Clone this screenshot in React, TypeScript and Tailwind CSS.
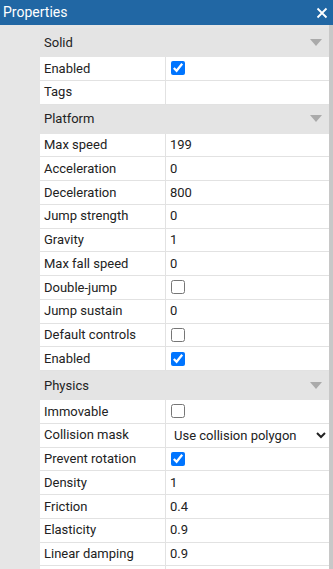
import React from 'react';

type Row =
  | { label: string; kind: 'text'; value: string }
  | { label: string; kind: 'check'; checked: boolean }
  | { label: string; kind: 'select'; value: string };

interface Section {
  title: string;
  rows: Row[];
}

const sections: Section[] = [
  {
    title: 'Solid',
    rows: [
      { label: 'Enabled', kind: 'check', checked: true },
      { label: 'Tags', kind: 'text', value: '' },
    ],
  },
  {
    title: 'Platform',
    rows: [
      { label: 'Max speed', kind: 'text', value: '199' },
      { label: 'Acceleration', kind: 'text', value: '0' },
      { label: 'Deceleration', kind: 'text', value: '800' },
      { label: 'Jump strength', kind: 'text', value: '0' },
      { label: 'Gravity', kind: 'text', value: '1' },
      { label: 'Max fall speed', kind: 'text', value: '0' },
      { label: 'Double-jump', kind: 'check', checked: false },
      { label: 'Jump sustain', kind: 'text', value: '0' },
      { label: 'Default controls', kind: 'check', checked: false },
      { label: 'Enabled', kind: 'check', checked: true },
    ],
  },
  {
    title: 'Physics',
    rows: [
      { label: 'Immovable', kind: 'check', checked: false },
      { label: 'Collision mask', kind: 'select', value: 'Use collision polygon' },
      { label: 'Prevent rotation', kind: 'check', checked: true },
      { label: 'Density', kind: 'text', value: '1' },
      { label: 'Friction', kind: 'text', value: '0.4' },
      { label: 'Elasticity', kind: 'text', value: '0.9' },
      { label: 'Linear damping', kind: 'text', value: '0.9' },
      { label: 'Angular damping', kind: 'text', value: '0.01' },
    ],
  },
];

const PropertyRow: React.FC<{ row: Row }> = ({ row }) => (
  <div className="flex h-[23.75px] shrink-0 bg-white border-b border-[#e2e2e2]">
    <div className="w-[126px] shrink-0 border-r border-[#e2e2e2] pl-1 flex items-center whitespace-nowrap overflow-hidden">
      {row.label}
    </div>
    <div className="flex-1 flex items-center pl-[4px] min-w-0">
      {row.kind === 'text' && <span>{row.value}</span>}
      {row.kind === 'check' && (
        <input
          type="checkbox"
          defaultChecked={row.checked}
          className="w-[14px] h-[14px] m-0 ml-[1px] accent-[#0075ff]"
        />
      )}
      {row.kind === 'select' && (
        <select className="w-full h-full bg-white text-[13px] outline-none pr-[2px]" defaultValue={row.value}>
          <option>{row.value}</option>
          <option>Use bounding box</option>
          <option>Circle</option>
        </select>
      )}
    </div>
  </div>
);

const App: React.FC = () => {
  return (
    <div className="w-[333px] h-[569px] overflow-hidden flex flex-col bg-[#e6e6e6] text-[13px] text-[#222] font-['Roboto',sans-serif]">
      <div className="h-[25px] shrink-0 bg-[#2167a4] text-white flex items-center justify-between pl-[3px] pr-[4px] text-[14px]">
        <span>Properties</span>
        <svg width="12" height="12" viewBox="0 0 12 12" className="mr-[1px]">
          <path d="M1.5 1.5 L10.5 10.5 M10.5 1.5 L1.5 10.5" stroke="white" strokeWidth="1.8" />
        </svg>
      </div>
      <div className="flex flex-1 min-h-0">
        <div className="w-[40px] shrink-0" />
        <div className="flex-1 min-w-0 pt-[3px]">
          {sections.map((s) => (
            <div key={s.title}>
              <div className="h-[29px] flex items-center justify-between pl-1 pr-[7px] bg-[#e4e4e4]">
                <span>{s.title}</span>
                <svg width="12" height="8" viewBox="0 0 12 8">
                  <path d="M0 0 H12 L6 7 Z" fill="#aaaaaa" />
                </svg>
              </div>
              {s.rows.map((r, i) => (
                <PropertyRow key={s.title + i} row={r} />
              ))}
            </div>
          ))}
        </div>
        <div className="w-[4px] shrink-0 bg-[#c8c8c8]" />
      </div>
    </div>
  );
};

export default App;
